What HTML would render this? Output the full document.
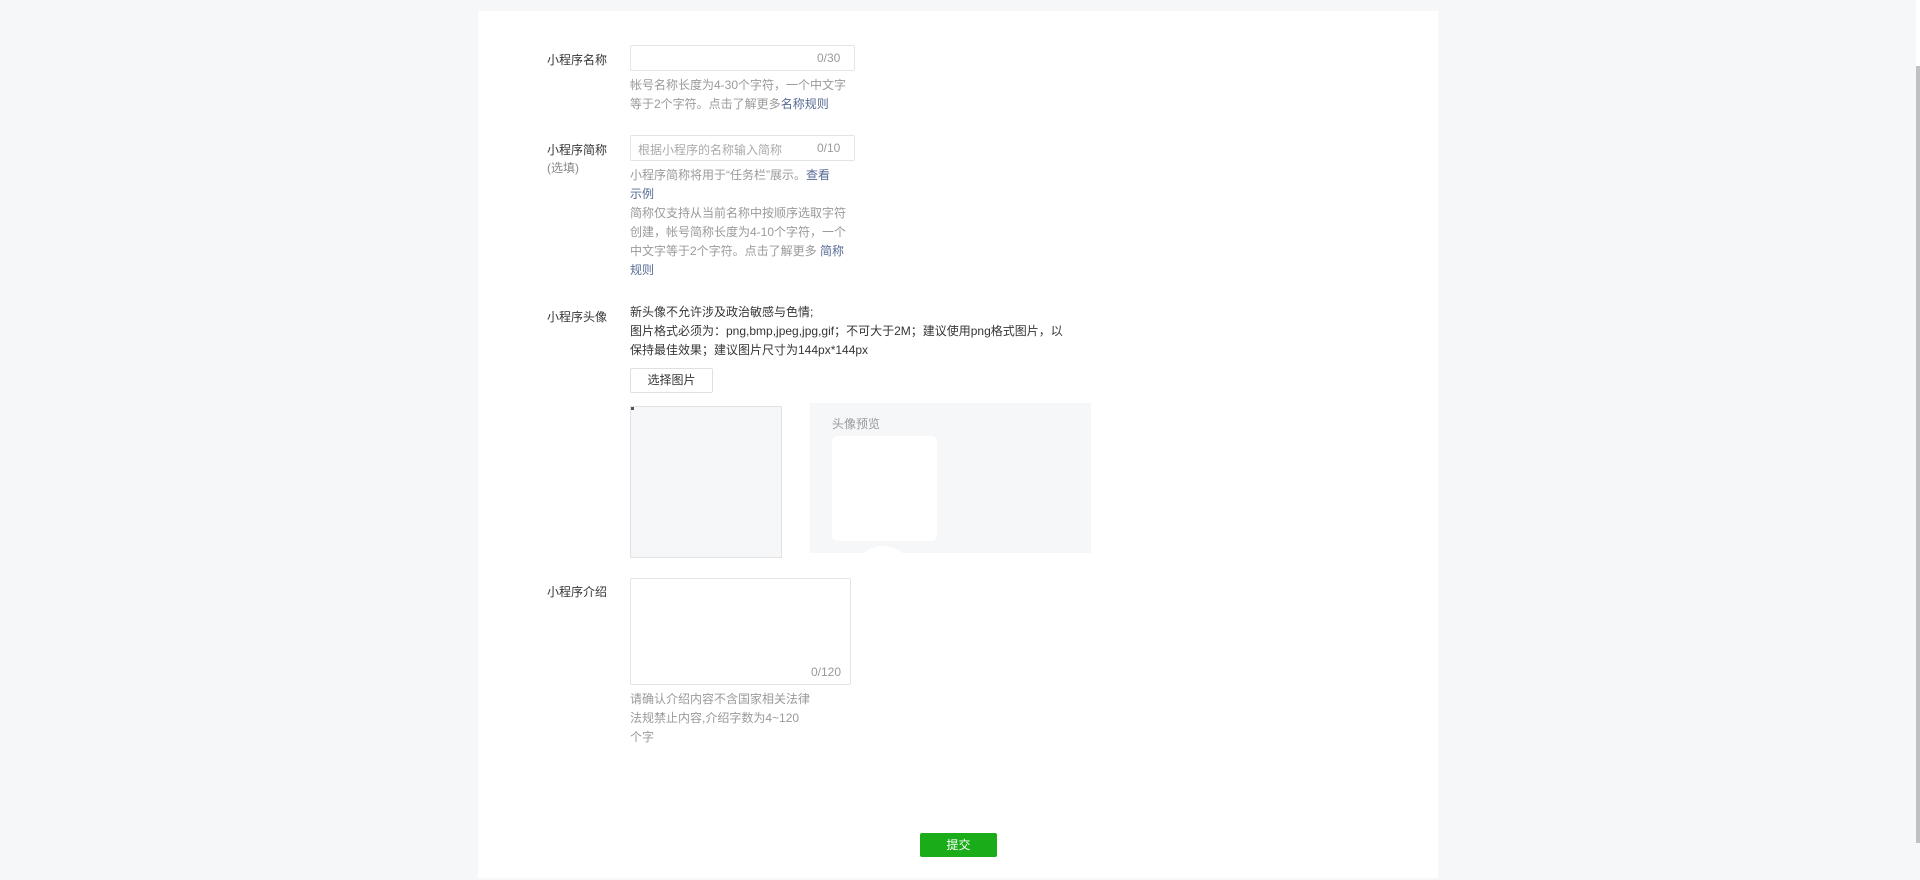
<!DOCTYPE html>
<html><head><meta charset="utf-8"><style>
*{margin:0;padding:0;box-sizing:border-box}
body{width:1920px;height:880px;background:#f6f7f9;position:relative;overflow:hidden;font-family:"Liberation Sans","Noto Sans CJK SC",sans-serif;font-size:12px;color:#353535}
.a{position:absolute}
.card{left:478px;top:11px;width:960px;height:867px;background:#fff}
.lbl{left:547px;color:#353535;font-size:12px;line-height:18px}
.inp{left:630px;width:225px;height:26px;border:1px solid #e4e4e4;border-radius:2px;background:#fff}
.cnt{color:#9a9a9a;font-size:12px}
.help{left:630px;color:#9a9a9a;font-size:12px;line-height:19px;white-space:nowrap}
.help a{color:#576b95;text-decoration:none}
</style></head><body>
<div class="a card"></div>
<div class="a" style="left:1916px;top:66px;width:4px;height:777px;background:#c1c1c1"></div>
<div class="a" style="left:1916px;top:0;width:4px;height:66px;background:#fff"></div>

<div class="a lbl" style="top:51px">小程序名称</div>
<div class="a inp" style="top:45px"></div>
<div class="a cnt" style="left:817px;top:51px">0/30</div>
<div class="a help" style="top:76px">帐号名称长度为4-30个字符，一个中文字<br>等于2个字符。点击了解更多<a>名称规则</a></div>

<div class="a lbl" style="top:141px">小程序简称<br><span style="color:#888">(选填)</span></div>
<div class="a inp" style="top:135px"></div>
<div class="a cnt" style="left:638px;top:141px;color:#aaa">根据小程序的名称输入简称</div>
<div class="a cnt" style="left:817px;top:141px">0/10</div>
<div class="a help" style="top:166px">小程序简称将用于“任务栏”展示。<a>查看</a><br><a>示例</a><br>简称仅支持从当前名称中按顺序选取字符<br>创建，帐号简称长度为4-10个字符，一个<br>中文字等于2个字符。点击了解更多 <a>简称</a><br><a>规则</a></div>

<div class="a lbl" style="top:308px">小程序头像</div>
<div class="a" style="left:630px;top:303px;line-height:19px;white-space:nowrap">新头像不允许涉及政治敏感与色情;<br>图片格式必须为：png,bmp,jpeg,jpg,gif；不可大于2M；建议使用png格式图片，以<br>保持最佳效果；建议图片尺寸为144px*144px</div>
<div class="a" style="left:630px;top:368px;width:83px;height:25px;border:1px solid #e0e0e0;border-radius:2px;text-align:center;line-height:23px;background:#fff">选择图片</div>
<div class="a" style="left:630px;top:406px;width:152px;height:152px;border:1px solid #e2e2e2;background:#f6f7f9"></div>
<div class="a" style="left:631px;top:407px;width:3px;height:3px;background:#555"></div>
<div class="a" style="left:810px;top:403px;width:281px;height:150px;background:#f6f7f9;overflow:hidden">
<div class="a" style="left:22px;top:12px;color:#999">头像预览</div>
<div class="a" style="left:22px;top:33px;width:105px;height:105px;background:#fff;border-radius:6px"></div>
<div class="a" style="left:43px;top:143px;width:60px;height:60px;background:#fff;border-radius:50%"></div>
</div>

<div class="a lbl" style="top:583px">小程序介绍</div>
<div class="a" style="left:630px;top:578px;width:221px;height:107px;border:1px solid #e4e4e4;border-radius:2px"></div>
<div class="a cnt" style="left:811px;top:665px">0/120</div>
<div class="a help" style="top:690px">请确认介绍内容不含国家相关法律<br>法规禁止内容,介绍字数为4~120<br>个字</div>

<div class="a" style="left:920px;top:833px;width:77px;height:24px;background:#1aad19;border-radius:2px;color:#fff;text-align:center;line-height:24px">提交</div>
</body></html>
